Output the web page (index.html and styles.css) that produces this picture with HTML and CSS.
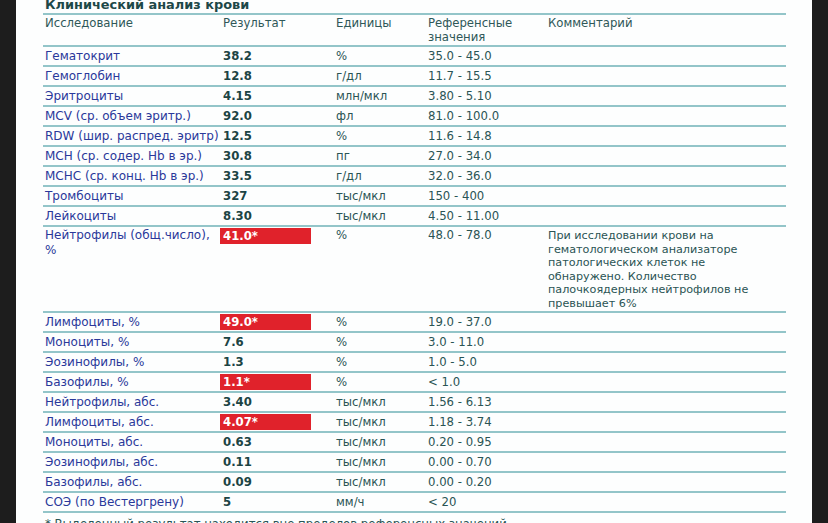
FILE: index.html
```html
<!DOCTYPE html>
<html lang="ru">
<head>
<meta charset="utf-8">
<title>Клинический анализ крови</title>
<link rel="stylesheet" href="styles.css">
</head>
<body>
<div class="side"></div>
<main class="sheet">
  <div class="title">Клинический анализ крови</div>
  <table class="lab">
    <colgroup>
      <col class="c-name"><col class="c-res"><col class="c-unit"><col class="c-ref"><col class="c-com">
    </colgroup>
    <thead>
      <tr><th>Исследование</th><th>Результат</th><th>Единицы</th><th>Референсные<br>значения</th><th>Комментарий</th></tr>
    </thead>
    <tbody>
      <tr><td class="name">Гематокрит</td><td class="res"><span>38.2</span></td><td>%</td><td>35.0 - 45.0</td><td></td></tr>
      <tr><td class="name">Гемоглобин</td><td class="res"><span>12.8</span></td><td>г/дл</td><td>11.7 - 15.5</td><td></td></tr>
      <tr><td class="name">Эритроциты</td><td class="res"><span>4.15</span></td><td>млн/мкл</td><td>3.80 - 5.10</td><td></td></tr>
      <tr><td class="name">MCV (ср. объем эритр.)</td><td class="res"><span>92.0</span></td><td>фл</td><td>81.0 - 100.0</td><td></td></tr>
      <tr><td class="name">RDW (шир. распред. эритр)</td><td class="res"><span>12.5</span></td><td>%</td><td>11.6 - 14.8</td><td></td></tr>
      <tr><td class="name">MCH (ср. содер. Hb в эр.)</td><td class="res"><span>30.8</span></td><td>пг</td><td>27.0 - 34.0</td><td></td></tr>
      <tr><td class="name">MCHC (ср. конц. Hb в эр.)</td><td class="res"><span>33.5</span></td><td>г/дл</td><td>32.0 - 36.0</td><td></td></tr>
      <tr><td class="name">Тромбоциты</td><td class="res"><span>327</span></td><td>тыс/мкл</td><td>150 - 400</td><td></td></tr>
      <tr><td class="name">Лейкоциты</td><td class="res"><span>8.30</span></td><td>тыс/мкл</td><td>4.50 - 11.00</td><td></td></tr>
      <tr class="tall"><td class="name">Нейтрофилы (общ.число),<br>%</td><td class="res"><span class="flag">41.0*</span></td><td>%</td><td>48.0 - 78.0</td><td class="comment">При исследовании крови на гематологическом анализаторе патологических клеток не обнаружено. Количество палочкоядерных нейтрофилов не превышает 6%</td></tr>
      <tr><td class="name">Лимфоциты, %</td><td class="res"><span class="flag">49.0*</span></td><td>%</td><td>19.0 - 37.0</td><td></td></tr>
      <tr><td class="name">Моноциты, %</td><td class="res"><span>7.6</span></td><td>%</td><td>3.0 - 11.0</td><td></td></tr>
      <tr><td class="name">Эозинофилы, %</td><td class="res"><span>1.3</span></td><td>%</td><td>1.0 - 5.0</td><td></td></tr>
      <tr><td class="name">Базофилы, %</td><td class="res"><span class="flag">1.1*</span></td><td>%</td><td>&lt; 1.0</td><td></td></tr>
      <tr><td class="name">Нейтрофилы, абс.</td><td class="res"><span>3.40</span></td><td>тыс/мкл</td><td>1.56 - 6.13</td><td></td></tr>
      <tr><td class="name">Лимфоциты, абс.</td><td class="res"><span class="flag">4.07*</span></td><td>тыс/мкл</td><td>1.18 - 3.74</td><td></td></tr>
      <tr><td class="name">Моноциты, абс.</td><td class="res"><span>0.63</span></td><td>тыс/мкл</td><td>0.20 - 0.95</td><td></td></tr>
      <tr><td class="name">Эозинофилы, абс.</td><td class="res"><span>0.11</span></td><td>тыс/мкл</td><td>0.00 - 0.70</td><td></td></tr>
      <tr><td class="name">Базофилы, абс.</td><td class="res"><span>0.09</span></td><td>тыс/мкл</td><td>0.00 - 0.20</td><td></td></tr>
      <tr><td class="name">СОЭ (по Вестергрену)</td><td class="res"><span>5</span></td><td>мм/ч</td><td>&lt; 20</td><td></td></tr>
    </tbody>
  </table>
  <p class="note">* Выделенный результат находится вне пределов референсных значений</p>
</main>
<div class="side"></div>
</body>
</html>
```

FILE: styles.css
```css
html, body {
  margin: 0;
  padding: 0;
  height: 100%;
  overflow: hidden;
}
body {
  display: flex;
  background: #1d1d1d;
  font-family: "DejaVu Sans", Verdana, sans-serif;
  font-size: 11.7px;
  color: #2a5454;
}
.side {
  width: 16px;
  flex: none;
  background: #1d1d1d;
}
.sheet {
  flex: 1;
  background: #fdfefe;
  padding: 0 26px 0 27px;
}
.title {
  font-weight: bold;
  font-size: 12.9px;
  line-height: 10px;
  height: 13px;
  padding-left: 2px;
  color: #1d4848;
  border-bottom: 2px solid #93c5c9;
  width: 741px;
}
.lab {
  border-collapse: collapse;
  table-layout: fixed;
  width: 743px;
}
.c-name { width: 177px; }
.c-res { width: 113px; }
.c-unit { width: 92px; }
.c-ref { width: 120px; }
.c-com { width: 241px; }
.lab th {
  font-weight: normal;
  text-align: left;
  vertical-align: top;
  line-height: 14px;
  height: 31px;
  padding: 1px 0 1px 3px;
  box-sizing: border-box;
  color: #2f5858;
  border-bottom: 2px solid #93c5c9;
}
.lab th:first-child { padding-left: 2px; }
.lab td {
  vertical-align: top;
  line-height: 16px;
  padding: 1px 0 1px 3px;
  border-bottom: 2px solid #93c5c9;
  white-space: nowrap;
}
.lab td.name {
  padding-left: 2px;
  font-size: 12px;
  color: #2a389a;
}
.lab td.res {
  padding-left: 0;
}
.res span {
  display: block;
  width: 88px;
  height: 16px;
  padding-left: 3px;
  font-weight: bold;
  color: #1c4444;
}
.res span.flag {
  background: #e0222b;
  color: #ffffff;
}
.tall td {
  line-height: 14.5px;
  padding-bottom: 0;
}
.tall td.res { line-height: 16px; }
.lab td.comment {
  white-space: normal;
  font-size: 11.2px;
  line-height: 13.6px;
  padding: 2px 20px 0 3px;
}
.note {
  margin: 4px 0 0 2px;
  line-height: 14px;
  color: #2a5454;
}
```
